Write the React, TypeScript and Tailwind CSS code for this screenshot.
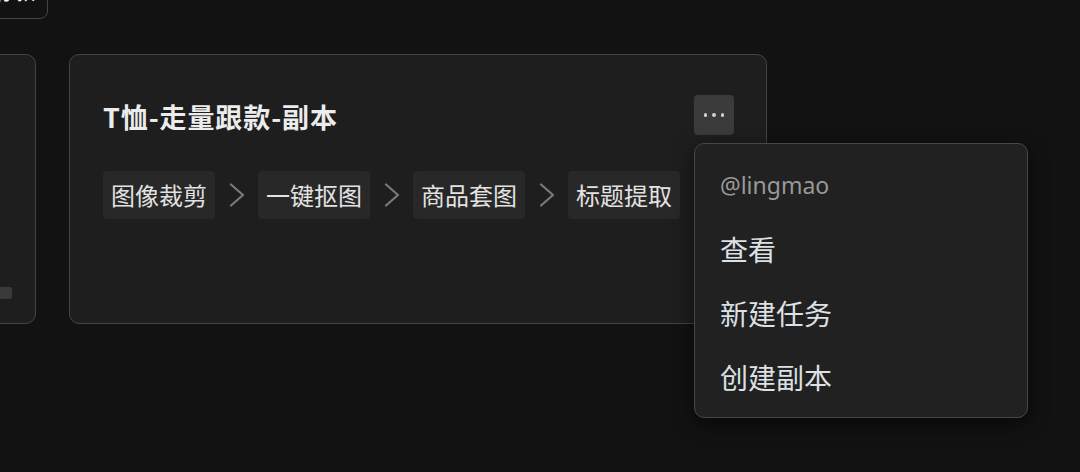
import React from "react";

const cjk = { fontFamily: '"Noto Sans CJK SC", "Noto Sans", sans-serif' };

function Chevron() {
  return (
    <svg width="16" height="24" viewBox="0 0 16 24" fill="none" className="shrink-0">
      <path d="M2 1.5 L14 12 L2 22.5" stroke="#7a7a7a" strokeWidth="2.2" strokeLinecap="round" strokeLinejoin="round" />
    </svg>
  );
}

function Tag({ children }: { children: React.ReactNode }) {
  return (
    <div className="h-[48px] px-[8px] flex items-center rounded-[4px] bg-[#282828] text-[24px] text-[#e2e2e2] leading-none">
      {children}
    </div>
  );
}

export default function App() {
  return (
    <div className="w-[1080px] h-[472px] bg-[#121212] overflow-hidden" style={cjk}>
      <div className="h-[19px] relative overflow-hidden">
        <div className="absolute right-[1032px] bottom-0 w-[120px] h-[40px] border-[1.5px] border-[#444444] rounded-[8px] flex items-start justify-end pr-[12px] text-[20px] leading-[22px] text-white pt-[1px]">
          保存款
        </div>
      </div>
      <div className="flex mt-[35px] gap-[33px]">
        <div className="w-[300px] -ml-[264px] h-[270px] rounded-[10px] border-[1.5px] border-[#444444] bg-[#1e1e1e] flex flex-col justify-end pb-[24px]">
          <div className="ml-[200px] w-[75px] h-[12px] rounded-[2px] bg-[#3a3a3a]" />
        </div>
        <div className="relative w-[698px] h-[270px] rounded-[10px] border-[1.5px] border-[#444444] bg-[#1e1e1e] pl-[33px] pr-[32px] pt-[40px]">
          <div className="flex items-center justify-between h-[40px]">
            <div className="text-[27px] tracking-[0.9px] font-bold text-[#ececec] leading-none mt-[3px]">T恤-走量跟款-副本</div>
            <div className="w-[40px] h-[40px] rounded-[4px] bg-[#3b3b3b] flex items-center justify-center gap-[5px]">
              <span className="w-[3.5px] h-[3.5px] rounded-full bg-[#d0d0d0]" />
              <span className="w-[3.5px] h-[3.5px] rounded-full bg-[#d0d0d0]" />
              <span className="w-[3.5px] h-[3.5px] rounded-full bg-[#d0d0d0]" />
            </div>
          </div>
          <div className="flex items-center mt-[36px] gap-[13.5px]">
            <Tag>图像裁剪</Tag>
            <Chevron />
            <Tag>一键抠图</Tag>
            <Chevron />
            <Tag>商品套图</Tag>
            <Chevron />
            <Tag>标题提取</Tag>
          </div>
          <div className="absolute left-[624px] top-[88px] w-[334px] h-[275px] rounded-[10px] border-[1.5px] border-[#474747] bg-[#212121] shadow-[0_6px_20px_rgba(0,0,0,0.6)] pt-[9px] pl-[25px]">
            <div className="h-[64px] flex items-center text-[23px] text-[#999999]" style={{ fontFamily: '"Noto Sans", sans-serif' }}>
              @lingmao
            </div>
            <div className="h-[64px] flex items-center text-[28px] text-[#dde0e4]">查看</div>
            <div className="h-[64px] flex items-center text-[28px] text-[#dde0e4]">新建任务</div>
            <div className="h-[64px] flex items-center text-[28px] text-[#dde0e4]">创建副本</div>
          </div>
        </div>
      </div>
    </div>
  );
}
